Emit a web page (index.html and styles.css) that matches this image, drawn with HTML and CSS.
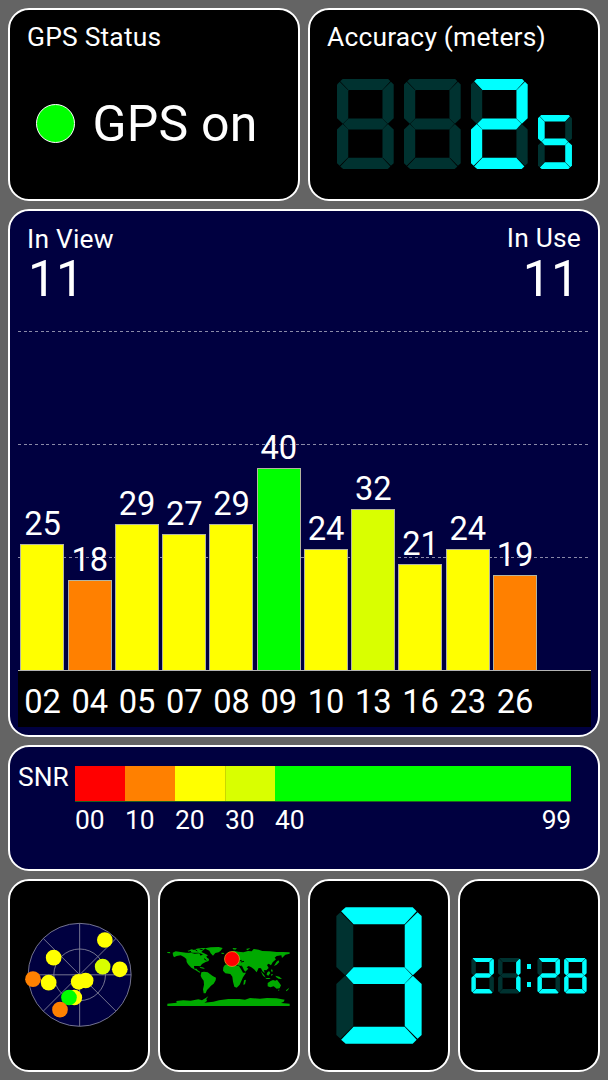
FILE: index.html
```html
<!DOCTYPE html>
<html lang="en">
<head>
<meta charset="utf-8">
<title>GPS Status</title>
<link rel="stylesheet" href="styles.css">
</head>
<body>
<main class="dashboard">
  <section class="panel status">
    <h2 class="title">GPS Status</h2>
    <div class="state"><span class="lamp"></span><span class="state-text">GPS on</span></div>
  </section>

  <section class="panel accuracy">
    <h2 class="title">Accuracy (meters)</h2>
    <div class="readout">
      <div class="digit"><i class="a"></i><i class="b"></i><i class="c"></i><i class="d"></i><i class="e"></i><i class="f"></i><i class="g"></i></div>
      <div class="digit"><i class="a"></i><i class="b"></i><i class="c"></i><i class="d"></i><i class="e"></i><i class="f"></i><i class="g"></i></div>
      <div class="digit n2"><i class="a"></i><i class="b"></i><i class="c"></i><i class="d"></i><i class="e"></i><i class="f"></i><i class="g"></i></div>
      <div class="digit small n5"><i class="a"></i><i class="b"></i><i class="c"></i><i class="d"></i><i class="e"></i><i class="f"></i><i class="g"></i></div>
    </div>
  </section>

  <section class="panel signal">
    <header class="counts">
      <div class="count"><h2 class="count-title">In View</h2><p class="count-value">11</p></div>
      <div class="count right"><h2 class="count-title">In Use</h2><p class="count-value">11</p></div>
    </header>
    <div class="plot">
      <div class="column"><span class="value">25</span><span class="bar fair" style="height:126px"></span></div>
      <div class="column"><span class="value">18</span><span class="bar weak" style="height:90px"></span></div>
      <div class="column"><span class="value">29</span><span class="bar fair" style="height:146px"></span></div>
      <div class="column"><span class="value">27</span><span class="bar fair" style="height:136px"></span></div>
      <div class="column"><span class="value">29</span><span class="bar fair" style="height:146px"></span></div>
      <div class="column"><span class="value">40</span><span class="bar best" style="height:202px"></span></div>
      <div class="column"><span class="value">24</span><span class="bar fair" style="height:121px"></span></div>
      <div class="column"><span class="value">32</span><span class="bar good" style="height:161px"></span></div>
      <div class="column"><span class="value">21</span><span class="bar fair" style="height:106px"></span></div>
      <div class="column"><span class="value">24</span><span class="bar fair" style="height:121px"></span></div>
      <div class="column"><span class="value">19</span><span class="bar weak" style="height:95px"></span></div>
    </div>
    <div class="axis">
      <span>02</span><span>04</span><span>05</span><span>07</span><span>08</span><span>09</span><span>10</span><span>13</span><span>16</span><span>23</span><span>26</span>
    </div>
  </section>

  <section class="panel snr">
    <span class="snr-name">SNR</span>
    <div class="scale">
      <div class="ramp"><span class="none"></span><span class="weak"></span><span class="fair"></span><span class="good"></span><span class="best"></span></div>
      <div class="ticks"><span>00</span><span>10</span><span>20</span><span>30</span><span>40</span><span class="last">99</span></div>
    </div>
  </section>

  <nav class="tiles">
    <div class="panel tile">
      <svg class="radar" viewBox="64 67 316 316">
        <g fill="#000040" stroke="#85859c" stroke-width="2.6">
          <circle cx="222" cy="225.5" r="154.5"/>
          <circle cx="222" cy="225.5" r="77.5"/>
          <path d="M222 71V380M67.500 225.500H376.500M112.800 116.300L331.200 334.700M331.200 116.300L112.800 334.700"/>
        </g>
        <g fill="#ff0">
          <circle cx="297.500" cy="121" r="23.500"/><circle cx="144" cy="174" r="23.500"/>
          <circle cx="342.500" cy="209" r="23.500"/><circle cx="129" cy="249" r="23.500"/>
          <circle cx="219" cy="246.500" r="23.500"/><circle cx="240" cy="242.500" r="23.500"/>
          <circle cx="206" cy="293.500" r="23.500"/>
        </g>
        <circle cx="291" cy="201" r="23.500" fill="#d9ff00"/>
        <circle cx="190" cy="293.500" r="23.500" fill="#0f0"/>
        <circle cx="82" cy="238.500" r="23.500" fill="#ff8000"/>
        <circle cx="163" cy="330" r="23.500" fill="#ff8000"/>
      </svg>
    </div>
    <div class="panel tile">
      <svg class="world" viewBox="0 0 420 270">
        <g fill="#0a0">
          <path d="M22 66L30 66L31 70L22 69ZM38 68L47 64L62 66L78 68L95 69L104 71L118 70L122 77L130 72L138 76L141 83L147 87L146 93L137 96L126 102L121 109L114 108L102 108L103 116L110 116L113 121L121 126L119 128L107 121L94 113L84 103L80 96L79 87L72 81L62 76L50 78L42 82L39 76Z"/>
          <path d="M83 62L95 58L102 60L110 56L122 54L138 54L130 60L124 66L132 70L144 76L140 79L128 73L116 68L98 68L86 66Z"/>
          <path d="M135 55L152 52L176 51L188 54L182 62L176 67L166 69L159 77L152 70L148 62L139 58ZM184 68L193 69L191 72L185 72Z"/>
          <path d="M119 111L127 112L135 115L130 116L121 114ZM124 127L132 125L143 127L150 132L158 138L168 143L167 151L161 161L153 167L147 174L141 180L137 190L131 190L129 178L132 164L131 152L125 144L122 137Z"/>
          <path d="M195 99L199 92L205 86L199 82L203 78L214 74L210 68L222 62L234 65L250 67L264 63L275 64L281 57L296 59L307 63L330 64L350 66L370 66L389 67L389 71L376 74L366 84L364 76L350 78L344 83L348 88L338 97L333 106L326 101L321 105L326 114L319 121L312 120L314 130L307 123L303 115L296 114L290 127L282 118L274 112L266 108L260 112L265 116L256 125L249 117L243 108L232 106L231 99L222 102L213 96L206 101Z"/>
          <path d="M195 104L212 103L220 106L237 108L244 119L249 128L258 128L249 142L244 153L239 164L230 173L223 170L219 155L217 140L211 132L196 130L189 122L190 112ZM252 151L258 149L255 163L250 164Z"/>
          <path d="M323 159L332 153L339 150L346 152L351 149L356 156L363 166L359 175L350 176L341 169L331 172L323 169ZM354 179L359 179L356 183ZM378 181L388 173L384 180L379 184Z"/>
          <path d="M302 123L312 134L317 143L309 137ZM321 128L327 123L331 129L325 137L320 134ZM316 144L328 144L332 147L320 147ZM333 133L339 132L335 139ZM346 137L358 140L366 147L356 146L349 142ZM334 118L338 120L337 127L333 123ZM349 96L355 91L358 96L350 104L342 108ZM218 54L231 55L226 59L219 58ZM258 57L271 54L263 61Z"/>
          <path d="M22 221L50 218L49 213L70 211L92 212L115 208L126 211L137 204L145 199L139 207L141 213L133 218L160 215L177 211L205 207L238 207L255 209L270 204L300 206L321 204L350 205L374 209L371 215L363 219L389 221L389 228H22Z"/>
        </g>
        <path d="M85 63L93 65M106 59L112 63M119 57L128 59M132 86L139 91M238 93L245 91M243 96L252 94M244 107L250 119" fill="none" stroke="#000" stroke-width="3"/>
        <circle cx="216" cy="87" r="22.500" fill="#f00" stroke="#e8b020" stroke-width="2"/>
      </svg>
    </div>
    <div class="panel tile">
      <div class="digit large n3"><i class="a"></i><i class="b"></i><i class="c"></i><i class="d"></i><i class="e"></i><i class="f"></i><i class="g"></i></div>
    </div>
    <div class="panel tile clock">
      <div class="digit n2"><i class="a"></i><i class="b"></i><i class="c"></i><i class="d"></i><i class="e"></i><i class="f"></i><i class="g"></i></div>
      <div class="digit n1"><i class="a"></i><i class="b"></i><i class="c"></i><i class="d"></i><i class="e"></i><i class="f"></i><i class="g"></i></div>
      <div class="colon"><b></b><b></b></div>
      <div class="digit n2"><i class="a"></i><i class="b"></i><i class="c"></i><i class="d"></i><i class="e"></i><i class="f"></i><i class="g"></i></div>
      <div class="digit n8"><i class="a"></i><i class="b"></i><i class="c"></i><i class="d"></i><i class="e"></i><i class="f"></i><i class="g"></i></div>
    </div>
  </nav>
</main>
</body>
</html>
```

FILE: styles.css
```css
* { box-sizing: border-box; }

body {
  margin: 0;
  background: #646464;
  color: #fff;
  font-family: Roboto, "Liberation Sans", sans-serif;
}

.dashboard {
  display: grid;
  grid-template: 193px 528px 126px 193px / 292px 292px;
  gap: 8px;
  width: 608px;
  height: 1080px;
  padding: 8px;
}

.panel {
  overflow: hidden;
  border: 2px solid #fff;
  border-radius: 21px;
  background: #000;
}

.signal, .snr, .tiles { grid-column: 1 / -1; }
.signal, .snr { background: #000040; }

h2, p { margin: 0; font-weight: 400; }

.title {
  padding: 12px 0 0 17px;
  font-size: 26.400px;
  line-height: 30px;
  letter-spacing: 0.200px;
  white-space: nowrap;
}

.state { display: flex; align-items: center; padding: 32px 0 0 26px; }
.lamp {
  width: 39px;
  height: 39px;
  margin-right: 17.500px;
  border: 1px solid #fff;
  border-radius: 50%;
  background: #0f0;
}
.state-text { font-size: 50px; line-height: 76px; letter-spacing: 0.200px; margin-top: 2px; }

/* Seven-segment digits: the segments share one grid cell. */
.digit { display: grid; width: 56.700px; height: 90.500px; }
.digit.small { width: 34px; height: 54.500px; }
.digit.large { width: 85.300px; height: 136.500px; }
.digit i { grid-area: 1 / 1; background: #003230; }
.a { clip-path: polygon(11% 0, 89.500% 0, 94.200% 3%, 80% 12.500%, 20.200% 12.500%, 5.600% 3%); }
.b { clip-path: polygon(95.200% 3.600%, 100% 6.500%, 100% 43.800%, 89.700% 49.800%, 80.200% 44%, 80.200% 13%); }
.c { clip-path: polygon(89.700% 50.200%, 100% 56.200%, 100% 93.500%, 95.200% 96.400%, 80.200% 87%, 80.200% 56%); }
.d { clip-path: polygon(20.200% 87.500%, 80% 87.500%, 94.200% 97%, 89.500% 100%, 11% 100%, 5.600% 97%); }
.e { clip-path: polygon(10.300% 50.200%, 19.800% 56%, 19.800% 87%, 4.800% 96.400%, 0 93.500%, 0 56.200%); }
.f { clip-path: polygon(4.800% 3.600%, 19.800% 13%, 19.800% 44%, 10.300% 49.800%, 0 43.800%, 0 6.500%); }
.g { clip-path: polygon(11% 50%, 20.200% 44%, 79.800% 44%, 89% 50%, 79.800% 56.200%, 20.200% 56.200%); }

.n1 .b, .n1 .c,
.n2 .a, .n2 .b, .n2 .g, .n2 .e, .n2 .d,
.n3 .a, .n3 .b, .n3 .g, .n3 .c, .n3 .d,
.n5 .a, .n5 .f, .n5 .g, .n5 .c, .n5 .d,
.n8 i { background: #0ff; }

.readout { display: flex; align-items: flex-end; gap: 10.300px; padding: 26.600px 0 0 27px; }

.counts { display: flex; justify-content: space-between; height: 120px; padding: 12px 17px 0; }
.count-title { font-size: 26.400px; line-height: 32px; letter-spacing: 0.200px; }
.count-value { padding: 0 2px 0 1px; font-size: 50px; line-height: 48px; }
.right { text-align: right; }
.right .count-title { margin-top: -1px; padding-bottom: 1px; }

.plot, .axis {
  display: flex;
  gap: 3.250px;
  width: 573px;
  margin-left: 7.500px;
  padding-left: 2.900px;
}
.plot {
  align-items: flex-end;
  height: 340px;
  border-bottom: 1px solid #b4b4b4;
  background:
    repeating-linear-gradient(90deg, #8a8aa8 0 3px, transparent 3px 5.670px) 0 0 / 572px 1px no-repeat,
    repeating-linear-gradient(90deg, #8a8aa8 0 3px, transparent 3px 5.670px) 0 113px / 572px 1px no-repeat,
    repeating-linear-gradient(90deg, #8a8aa8 0 3px, transparent 3px 5.670px) 0 226px / 572px 1px no-repeat;
}
.column { display: flex; flex-direction: column; width: 44px; text-align: center; }
.value { font-size: 32.700px; line-height: 38px; margin-bottom: 1.500px; letter-spacing: -0.300px; }
.bar { border: 1px solid #b4b4a0; border-bottom: 0; }

.none { background: #f00; }
.weak { background: #ff8000; }
.fair { background: #ff0; }
.good { background: #d9ff00; }
.best { background: #0f0; }

.axis { height: 56px; background: #000; font-size: 32.700px; line-height: 63px; letter-spacing: -0.300px; }
.axis span { width: 44px; text-align: center; }

.snr { display: flex; padding: 19px 0 0 8px; font-size: 26.400px; }
.snr-name { width: 57px; line-height: 22px; }
.scale { width: 496px; }
.ramp { display: flex; height: 35.500px; border: 1px solid #206020; border-width: 0 0 1px; }
.ramp span { width: 50px; }
.ramp .good { border-left: 1px solid #c8d800; }
.ramp .best { flex: 1; }
.ticks { display: flex; line-height: 36px; letter-spacing: -0.200px; }
.ticks span { width: 50px; }
.ticks .last { flex: 1; text-align: right; }

.tiles { display: grid; grid-template-columns: repeat(4, 142px); gap: 8px; }
.tile { display: flex; align-items: center; justify-content: center; }
.radar { width: 105.300px; height: 105.300px; margin: 0 0 1px 0.700px; overflow: visible; }
.world { flex: none; width: 140px; height: 90px; margin: 0 0 2px 2px; }

.clock { gap: 4.200px; }
.clock .digit { width: 22.500px; height: 36px; }
.colon { display: flex; flex-direction: column; gap: 13.500px; margin: 0 2px; }
.colon b { width: 4.500px; height: 4.500px; background: #0ff; }
```
